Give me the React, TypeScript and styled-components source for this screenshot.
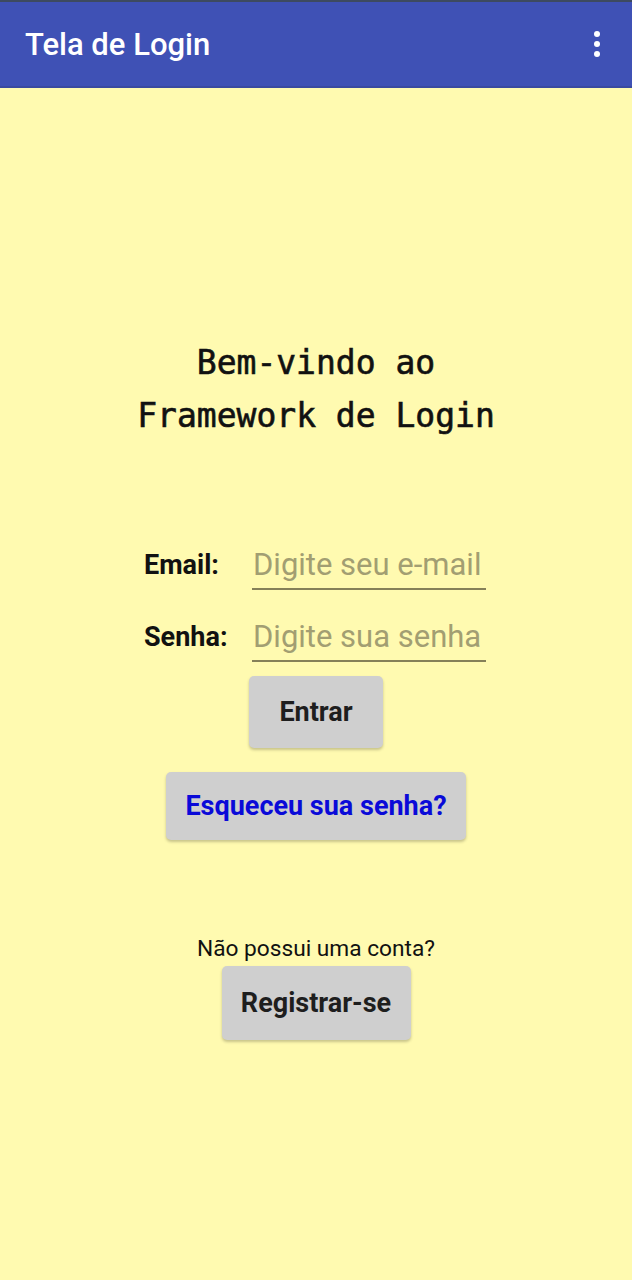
import React, { useState } from "react";
import { styled, createGlobalStyle } from "styled-components";

const GlobalStyle = createGlobalStyle`
  html, body {
    margin: 0;
    padding: 0;
    background: #fffab0;
  }
  * {
    box-sizing: border-box;
  }
`;

const Screen = styled.div`
  width: 632px;
  min-height: 1280px;
  background: #fffab0;
  font-family: Roboto, "Liberation Sans", sans-serif;
  display: flex;
  flex-direction: column;
`;

const AppBar = styled.header`
  height: 88px;
  background: #3f51b5;
  border-top: 2px solid #3d4a60;
  border-bottom: 2px solid #3a4aa0;
  display: flex;
  align-items: center;
  justify-content: space-between;
  padding: 0 23px 0 25px;
`;

const AppTitle = styled.h1`
  margin: 0;
  color: #fff;
  font-size: 31px;
  font-weight: 500;
`;

const MenuButton = styled.button`
  border: none;
  background: transparent;
  padding: 0;
  width: 24px;
  height: 40px;
  display: flex;
  align-items: center;
  justify-content: center;
`;

const Content = styled.main`
  display: flex;
  flex-direction: column;
  align-items: center;
`;

const Heading = styled.h2`
  margin: 248px 0 0;
  font-family: "DejaVu Sans Mono", "Liberation Mono", monospace;
  font-size: 33px;
  font-weight: normal;
  -webkit-text-stroke: 0.6px #111;
  line-height: 53px;
  text-align: center;
  color: #111;
`;

const Form = styled.form`
  margin-top: 98px;
  display: flex;
  flex-direction: column;
  align-items: center;
`;

const Field = styled.div`
  display: grid;
  grid-template-columns: 106px 234px;
  align-items: center;
  height: 50px;
  margin-bottom: 22px;
  &:last-of-type {
    margin-bottom: 14px;
  }
`;

const Label = styled.label`
  font-size: 27px;
  font-weight: bold;
  color: #111;
  margin-left: -2px;
`;

const Input = styled.input`
  height: 50px;
  width: 234px;
  border: none;
  border-bottom: 2px solid #858058;
  background: transparent;
  font-family: Roboto, "Liberation Sans", sans-serif;
  font-size: 31px;
  color: #222;
  padding: 0 0 0 1px;
  &::placeholder {
    color: #a29e72;
  }
  &:focus {
    outline: none;
  }
`;

const Button = styled.button<{ $blue?: boolean }>`
  border: none;
  border-radius: 5px;
  background: #cfcfcf;
  box-shadow: 0 2px 3px rgba(0, 0, 0, 0.22);
  font-family: Roboto, "Liberation Sans", sans-serif;
  font-size: 27px;
  font-weight: bold;
  color: ${(p) => (p.$blue ? "#0a0ad8" : "#1e1e1e")};
  cursor: pointer;
`;

const EnterButton = styled(Button)`
  width: 134px;
  height: 72px;
`;

const ForgotButton = styled(Button)`
  margin-top: 24px;
  width: 300px;
  height: 68px;
`;

const Question = styled.p`
  margin: 94px 0 0;
  font-size: 22.7px;
  color: #111;
  line-height: 30px;
`;

const RegisterButton = styled(Button)`
  margin-top: 2px;
  width: 189px;
  height: 74px;
`;

function DotsIcon() {
  return (
    <svg width="10" height="28" viewBox="0 0 10 28">
      <circle cx="5" cy="4" r="3" fill="#fff" />
      <circle cx="5" cy="14" r="3" fill="#fff" />
      <circle cx="5" cy="24" r="3" fill="#fff" />
    </svg>
  );
}

export default function App() {
  const [email, setEmail] = useState("");
  const [senha, setSenha] = useState("");
  const onSubmit = (e: React.FormEvent<HTMLFormElement>) => {
    e.preventDefault();
  };
  return (
    <>
      <GlobalStyle />
      <Screen>
        <AppBar>
          <AppTitle>Tela de Login</AppTitle>
          <MenuButton aria-label="Mais opções">
            <DotsIcon />
          </MenuButton>
        </AppBar>
        <Content>
          <Heading>
            Bem-vindo ao
            <br />
            Framework de Login
          </Heading>
          <Form onSubmit={onSubmit}>
            <Field>
              <Label htmlFor="email">Email:</Label>
              <Input
                id="email"
                type="email"
                value={email}
                onChange={(e) => setEmail(e.target.value)}
                placeholder="Digite seu e-mail"
              />
            </Field>
            <Field>
              <Label htmlFor="senha">Senha:</Label>
              <Input
                id="senha"
                type="password"
                value={senha}
                onChange={(e) => setSenha(e.target.value)}
                placeholder="Digite sua senha"
              />
            </Field>
            <EnterButton type="submit">Entrar</EnterButton>
          </Form>
          <ForgotButton $blue>Esqueceu sua senha?</ForgotButton>
          <Question>Não possui uma conta?</Question>
          <RegisterButton>Registrar-se</RegisterButton>
        </Content>
      </Screen>
    </>
  );
}
